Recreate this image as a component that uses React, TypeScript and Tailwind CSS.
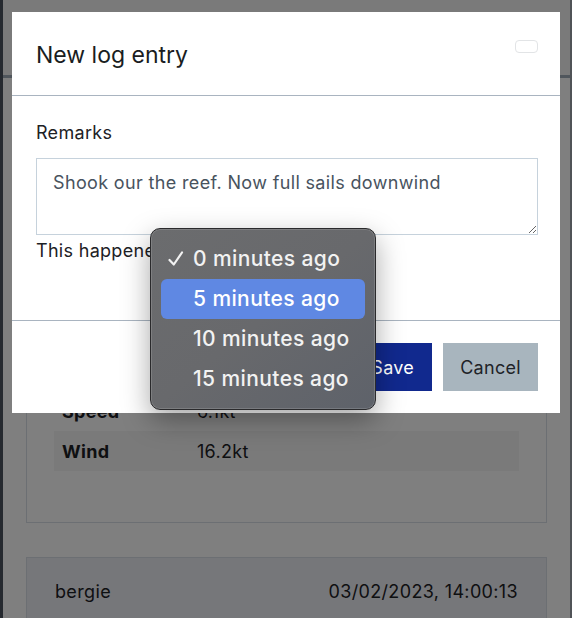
import { useState } from "react";

const rows = [
  { label: "Speed", value: "6.1kt" },
  { label: "Wind", value: "16.2kt" },
];

const options = ["0 minutes ago", "5 minutes ago", "10 minutes ago", "15 minutes ago"];

function Check() {
  return (
    <svg width="18" height="18" viewBox="0 0 18 18" fill="none" className="shrink-0">
      <path d="M2.5 10 L6.8 14.5 L15 2.5" stroke="#f2f2f2" strokeWidth="2.2" strokeLinecap="round" strokeLinejoin="round" />
    </svg>
  );
}

export default function App() {
  const [selected] = useState(0);
  const [hovered, setHovered] = useState(1);

  return (
    <div className="relative h-[618px] w-[572px] overflow-hidden bg-white font-[Inter,sans-serif] text-[#1d2125]">
      {/* page behind the modal */}
      <div className="flex h-full border-l-[3px] border-r-[2px] border-l-[#4a525e] border-r-[#a0a6ae]">
        <div className="flex-1">
          <header className="h-[78px] border-b-[3px] border-[#a0acb8] bg-[#f5f5f5]" />
          <main className="px-[23px] pt-[22px]">
            <section className="border border-[#d8dee6] px-[27px] pb-[51px]">
              <div className="h-[290px]" />
              {rows.map((r, i) => (
                <div key={r.label} className={`flex h-[40px] items-center px-2 text-[18px] tracking-[0.3px] ${i % 2 === 1 ? "bg-[#f4f4f4]" : ""}`}>
                  <span className="w-[135px] font-bold">{r.label}</span>
                  <span>{r.value}</span>
                </div>
              ))}
            </section>
            <section className="mt-[34px] border border-[#d8dee6] bg-[#eceef4] px-[28px]">
              <div className="flex h-[66px] items-center justify-between text-[18px] tracking-[0.35px]">
                <span>bergie</span>
                <span>03/02/2023, 14:00:13</span>
              </div>
            </section>
          </main>
        </div>
      </div>

      {/* backdrop */}
      <div className="absolute inset-0 bg-black/50" />

      {/* modal */}
      <div className="absolute left-[12px] top-[12px] w-[548px] bg-white">
        <div className="flex h-[84px] justify-between border-b border-[#a9b4c0] pl-6 pr-[22px]">
          <h2 className="self-center pt-[4px] text-[23px] text-[#1a1d21]">New log entry</h2>
          <button className="mt-[28px] h-[13px] w-[23px] rounded-[4px] border border-[#e2e4e6] bg-white" />
        </div>

        <div className="pb-[58px] pl-6 pr-[22px] pt-[26px]">
          <label className="block text-[18px] leading-[22px] tracking-[0.3px]">Remarks</label>
          <textarea
            readOnly
            defaultValue="Shook our the reef. Now full sails downwind"
            className="mt-[14px] block h-[77px] w-full resize-y border border-[#c6d2dc] px-4 pt-[13px] text-[18px] leading-[22px] tracking-[0.35px] text-[#48535e] outline-none"
          />
          <p className="mt-[5px] text-[18px] leading-[22px] tracking-[0.3px]">This happened</p>
        </div>

        <div className="flex justify-end gap-[11px] border-t border-[#a9b4c0] pb-[22px] pl-6 pr-[22px] pt-[22px]">
          <button className="h-[48px] bg-[#11298e] px-[18px] text-[18px] tracking-[0.3px] text-white">Save</button>
          <button className="h-[48px] bg-[#a8b5be] px-[17px] text-[18px] tracking-[0.3px] text-[#1f2328]">Cancel</button>
        </div>
      </div>

      {/* native select menu */}
      <div className="absolute left-[150px] top-[228px] w-[226px] rounded-[10px] border border-[#2a2a2c] bg-gradient-to-br from-[#6b6c6e] via-[#68696c] to-[#5e626a] p-[10px] shadow-[0_10px_28px_rgba(0,0,0,0.35),inset_0_0_0_1px_rgba(255,255,255,0.14)]">
        {options.map((o, i) => (
          <div
            key={o}
            onMouseEnter={() => setHovered(i)}
            className={`flex h-[40px] items-center rounded-[6px] pl-[6px] text-[21px] font-medium tracking-[0.4px] text-[#f2f2f2] ${hovered === i ? "bg-[#5f88e3] text-white" : ""}`}
          >
            <span className="flex w-[26px]">{selected === i && <Check />}</span>
            <span>{o}</span>
          </div>
        ))}
      </div>
    </div>
  );
}
